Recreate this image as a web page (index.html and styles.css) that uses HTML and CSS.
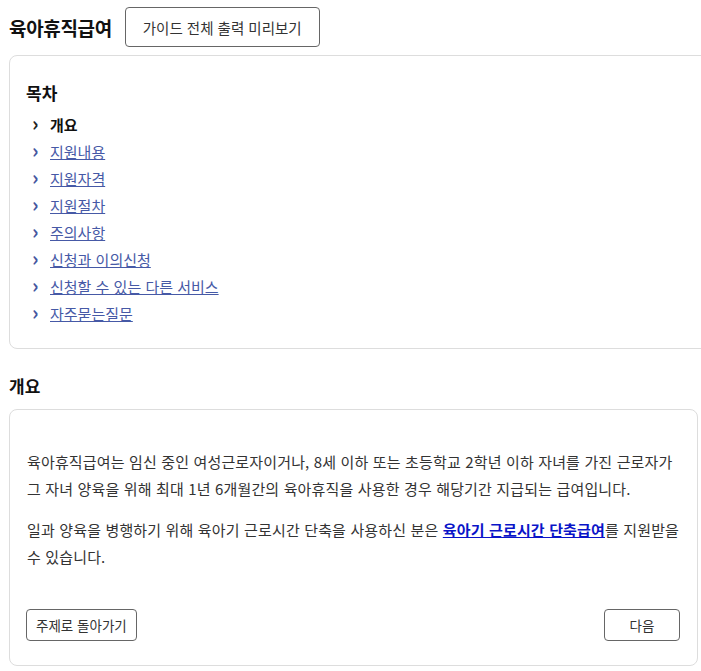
FILE: index.html
```html
<!DOCTYPE html>
<html lang="ko">
<head>
    <meta charset="UTF-8">
    <meta name="viewport" content="width=device-width, initial-scale=1.0">
    <title>육아휴직급여</title>
    <link rel="stylesheet" href="styles.css">
</head>
<body>
    <div class="page">
        <header class="guide-header">
            <h1>육아휴직급여</h1>
            <button class="btn btn-print" type="button">가이드 전체 출력 미리보기</button>
        </header>

        <!-- 목차 -->
        <nav class="toc">
            <h2>목차</h2>
            <ul>
                <li class="current"><span class="chev">&#x203A;</span>개요</li>
                <li><span class="chev">&#x203A;</span><a href="#">지원내용</a></li>
                <li><span class="chev">&#x203A;</span><a href="#">지원자격</a></li>
                <li><span class="chev">&#x203A;</span><a href="#">지원절차</a></li>
                <li><span class="chev">&#x203A;</span><a href="#">주의사항</a></li>
                <li><span class="chev">&#x203A;</span><a href="#">신청과 이의신청</a></li>
                <li><span class="chev">&#x203A;</span><a href="#">신청할 수 있는 다른 서비스</a></li>
                <li><span class="chev">&#x203A;</span><a href="#">자주묻는질문</a></li>
            </ul>
        </nav>

        <!-- 개요 -->
        <section class="section">
            <h2 class="section-title">개요</h2>
            <div class="card">
                <p>육아휴직급여는 임신 중인 여성근로자이거나, 8세 이하 또는 초등학교 2학년 이하 자녀를 가진 근로자가 그 자녀 양육을 위해 최대 1년 6개월간의 육아휴직을 사용한 경우 해당기간 지급되는 급여입니다.</p>
                <p>일과 양육을 병행하기 위해 육아기 근로시간 단축을 사용하신 분은 <a class="strong-link" href="#">육아기 근로시간 단축급여</a>를 지원받을 수 있습니다.</p>
                <div class="card-nav">
                    <button class="btn" type="button">주제로 돌아가기</button>
                    <button class="btn btn-next" type="button">다음</button>
                </div>
            </div>
        </section>
    </div>
</body>
</html>
```

FILE: styles.css
```css
* {
    margin: 0;
    padding: 0;
    box-sizing: border-box;
}

body {
    font-family: "Noto Sans CJK KR", "Noto Sans", sans-serif;
    background-color: #fff;
    color: #222;
    overflow: hidden;
}

.page {
    padding: 7px 0 0 9px;
}

.guide-header {
    display: flex;
    align-items: center;
    gap: 13px;
    margin-bottom: 8px;
}

h1 {
    font-size: 19px;
    font-weight: 700;
    letter-spacing: -0.35px;
    color: #111;
}

.btn {
    background: #fff;
    border: 1px solid #666;
    border-radius: 4px;
    font-family: inherit;
    font-size: 13.5px;
    color: #333;
    height: 32px;
    padding: 0 9px;
    cursor: pointer;
}

.btn-print {
    height: 40px;
    padding: 0 17px;
    font-size: 14.5px;
}

.btn-next {
    width: 76px;
}

.toc {
    width: 720px;
    border: 1px solid #ddd;
    border-radius: 8px;
    padding: 24px 16px 21px;
}

.toc h2 {
    font-size: 17px;
    font-weight: 700;
    color: #111;
    margin-bottom: 6px;
}

.toc ul {
    list-style: none;
    padding-left: 6px;
}

.toc li {
    display: flex;
    align-items: center;
    height: 27px;
    font-size: 15px;
}

.toc .chev {
    display: inline-block;
    width: 18px;
    font-size: 20px;
    font-weight: 700;
    color: #44559e;
    line-height: 1;
    margin-top: -3px;
}

.toc li.current {
    font-weight: 700;
    color: #111;
}

.toc li.current .chev {
    color: #222;
}

.toc a {
    color: #4659a6;
}

.section {
    margin-top: 24px;
    width: 689px;
}

.section-title {
    font-size: 17px;
    font-weight: 700;
    color: #111;
    margin-bottom: 11px;
}

.card {
    border: 1px solid #ddd;
    border-radius: 8px;
    padding: 38px 17px 24px;
}

.card p {
    font-size: 15px;
    line-height: 27px;
    letter-spacing: 0.15px;
    color: #333;
    margin-bottom: 14px;
}

.strong-link {
    color: #0a14c8;
    font-weight: 700;
}

.card-nav {
    display: flex;
    justify-content: space-between;
    margin: 39px 0 0 -1px;
}
```
